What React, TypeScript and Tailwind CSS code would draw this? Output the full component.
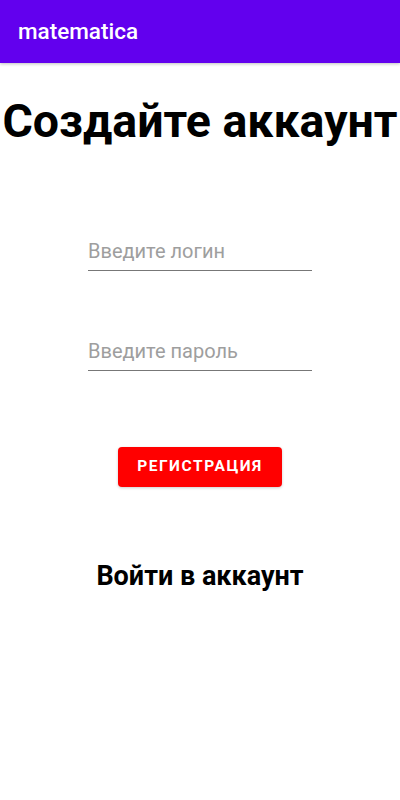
export default function App() {
  return (
    <div className="min-h-[800px] bg-white font-['Roboto',sans-serif]">
      <header className="h-[63px] bg-[#6200EE] flex items-center px-[18px] shadow-[0_1px_3px_rgba(0,0,0,0.25)]">
        <span className="text-white text-[22.5px] font-medium">matematica</span>
      </header>

      <h1 className="mt-[31px] text-center text-[46.5px] leading-[54px] font-bold text-black whitespace-nowrap">
        Создайте аккаунт
      </h1>

      <div className="mt-[73px] flex flex-col items-center gap-[50px]">
        <input
          className="w-[224px] h-[50px] border-b border-[#777] pt-[10px] text-[20px] text-black placeholder:text-[#9e9e9e] outline-none"
          placeholder="Введите логин"
        />
        <input
          type="password"
          className="w-[224px] h-[50px] border-b border-[#777] pt-[10px] text-[20px] text-black placeholder:text-[#9e9e9e] outline-none"
          placeholder="Введите пароль"
        />
      </div>

      <div className="mt-[76px] flex justify-center">
        <button className="w-[164px] h-[40px] rounded-[4px] bg-[#FF0000] text-white text-[15.5px] font-bold tracking-[0.1em] shadow-[0_1px_3px_rgba(0,0,0,0.2)]">
          РЕГИСТРАЦИЯ
        </button>
      </div>

      <p className="mt-[73px] text-center text-[27px] leading-[32px] font-bold text-black">Войти в аккаунт</p>
    </div>
  );
}
